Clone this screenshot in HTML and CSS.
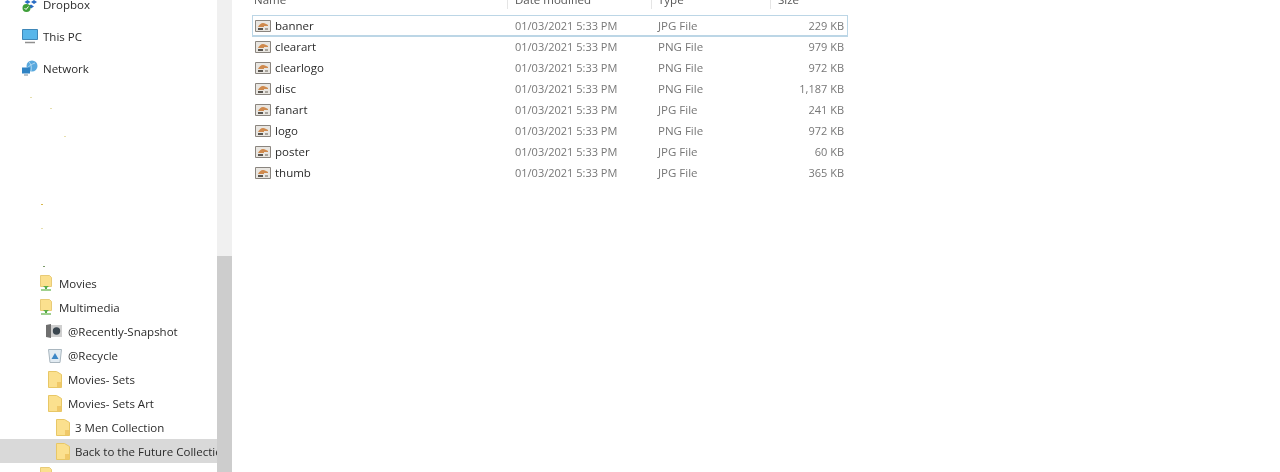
FILE: index.html
```html
<!DOCTYPE html>
<html lang="en">
<head>
    <meta charset="UTF-8">
    <title>Back to the Future Collection</title>
    <link rel="stylesheet" href="styles.css">
</head>
<body>
    <svg class="defs" width="0" height="0">
        <symbol id="folder" viewBox="0 0 14 17">
            <path d="M.5.5h8l5 3v13H.5z" fill="#fbe08e" stroke="#e8c766"/>
            <path d="M9 11h4v5H9z" fill="#f0c868"/>
        </symbol>
        <symbol id="share" viewBox="0 0 12 16">
            <path d="M.5.5h9l2 2v9H.5z" fill="#fbe08e" stroke="#e8cb78"/>
            <path d="M6 11v3" stroke="#5cad48" stroke-width="2"/>
            <path d="M3 11h6l-3 2.500z" fill="#5cad48"/>
            <path d="M1 15h10" stroke="#7fc06a" stroke-width="1.500"/>
        </symbol>
        <symbol id="image" viewBox="0 0 16 14">
            <path d="M.5 1.500h15v11H.5z" fill="#e9e6e1" stroke="#8a857f"/>
            <path d="M3 8c1-2 3-4 5-4s3 1 5 2v1H9v1H3z" fill="#cf8a4e"/>
            <path d="M3 9h5v2H3z" fill="#5a5650"/>
            <path d="M10 9h3v2h-3z" fill="#a9a49c"/>
        </symbol>
    </svg>

    <div class="window">
        <nav class="sidebar">
            <div class="tree">
                <div class="top-item">
                    <svg class="top-icon" viewBox="0 0 16 16">
                        <path d="M5.500 0l3 2-3 2-3-2zM12 0l3 2-3 2-3-2zM5.500 4l3 2-3 2-3-2zM12 4l3 2-3 2-3-2zM9 8.500l3 2-3 2-3-2z" fill="#2a6cc4"/>
                        <circle cx="4.500" cy="12" r="4" fill="#3f9f3a"/>
                        <path d="M2.500 12l1.500 1.500 2.500-3" fill="none" stroke="#fff"/>
                    </svg>
                    Dropbox
                </div>
                <div class="top-item">
                    <svg class="top-icon" viewBox="0 0 16 16">
                        <path d="M.5 1.500h15v10H.5z" fill="#58b6ea" stroke="#3f87b8"/>
                        <path d="M3 14.500h10" stroke="#8f8f8f" stroke-width="1.500"/>
                    </svg>
                    This PC
                </div>
                <div class="top-item">
                    <svg class="top-icon" viewBox="0 0 16 16">
                        <circle cx="10" cy="6" r="5.500" fill="#5aa9de"/>
                        <path d="M7 2c2 2 3 5 2 9M13 3c-3 1-6 3-8 5" fill="none" stroke="#bfe0f4" stroke-width=".8"/>
                        <path d="M0 7.500h8v6H0z" fill="#2f83c4"/>
                        <path d="M2 15h4" stroke="#a5b2bb" stroke-width="1.500"/>
                    </svg>
                    Network
                </div>
                <div class="specks">
                    <i class="speck speck-a"></i>
                    <i class="speck speck-b"></i>
                    <i class="speck speck-c"></i>
                    <i class="speck speck-d"></i>
                    <i class="speck speck-e"></i>
                    <i class="speck speck-f"></i>
                </div>
                <div class="item level-1"><svg class="share-icon"><use href="#share"/></svg>Movies</div>
                <div class="item level-1"><svg class="share-icon"><use href="#share"/></svg>Multimedia</div>
                <div class="item level-2">
                    <svg class="drive-icon" viewBox="0 0 16 14">
                        <path d="M0 1l5-1v14l-5-1z" fill="#6f6f6f"/>
                        <path d="M5 1h11v12H5z" fill="#cfcfcf"/>
                        <circle cx="10.500" cy="7" r="3.700" fill="#3a464f"/>
                    </svg>
                    @Recently-Snapshot
                </div>
                <div class="item level-2">
                    <svg class="bin-icon" viewBox="0 0 14 15">
                        <path d="M.5 1.500h13l-1.500 13H2z" fill="#e2ebf2" stroke="#a9b6bf"/>
                        <path d="M7 5l3.500 6h-7z" fill="#3b86c6"/>
                    </svg>
                    @Recycle
                </div>
                <div class="item level-2"><svg class="folder-icon"><use href="#folder"/></svg>Movies- Sets</div>
                <div class="item level-2"><svg class="folder-icon"><use href="#folder"/></svg>Movies- Sets Art</div>
                <div class="item level-3"><svg class="folder-icon"><use href="#folder"/></svg>3 Men Collection</div>
                <div class="item level-3 selected"><svg class="folder-icon"><use href="#folder"/></svg>Back to the Future Collection</div>
                <div class="item level-1"><svg class="share-icon"><use href="#share"/></svg>Music</div>
            </div>
            <div class="scrollbar"><div class="thumb"></div></div>
        </nav>

        <main class="files">
            <div class="file-header">
                <span class="col-name">Name</span>
                <span class="col-date">Date modified</span>
                <span class="col-type">Type</span>
                <span class="col-size">Size</span>
            </div>
            <div class="file-row focused">
                <span class="col-name"><svg class="file-icon"><use href="#image"/></svg>banner</span>
                <span class="col-date">01/03/2021 5:33 PM</span>
                <span class="col-type">JPG File</span>
                <span class="col-size">229 KB</span>
            </div>
            <div class="file-row">
                <span class="col-name"><svg class="file-icon"><use href="#image"/></svg>clearart</span>
                <span class="col-date">01/03/2021 5:33 PM</span>
                <span class="col-type">PNG File</span>
                <span class="col-size">979 KB</span>
            </div>
            <div class="file-row">
                <span class="col-name"><svg class="file-icon"><use href="#image"/></svg>clearlogo</span>
                <span class="col-date">01/03/2021 5:33 PM</span>
                <span class="col-type">PNG File</span>
                <span class="col-size">972 KB</span>
            </div>
            <div class="file-row">
                <span class="col-name"><svg class="file-icon"><use href="#image"/></svg>disc</span>
                <span class="col-date">01/03/2021 5:33 PM</span>
                <span class="col-type">PNG File</span>
                <span class="col-size">1,187 KB</span>
            </div>
            <div class="file-row">
                <span class="col-name"><svg class="file-icon"><use href="#image"/></svg>fanart</span>
                <span class="col-date">01/03/2021 5:33 PM</span>
                <span class="col-type">JPG File</span>
                <span class="col-size">241 KB</span>
            </div>
            <div class="file-row">
                <span class="col-name"><svg class="file-icon"><use href="#image"/></svg>logo</span>
                <span class="col-date">01/03/2021 5:33 PM</span>
                <span class="col-type">PNG File</span>
                <span class="col-size">972 KB</span>
            </div>
            <div class="file-row">
                <span class="col-name"><svg class="file-icon"><use href="#image"/></svg>poster</span>
                <span class="col-date">01/03/2021 5:33 PM</span>
                <span class="col-type">JPG File</span>
                <span class="col-size">60 KB</span>
            </div>
            <div class="file-row">
                <span class="col-name"><svg class="file-icon"><use href="#image"/></svg>thumb</span>
                <span class="col-date">01/03/2021 5:33 PM</span>
                <span class="col-type">JPG File</span>
                <span class="col-size">365 KB</span>
            </div>
        </main>
    </div>
</body>
</html>
```

FILE: styles.css
```css
html, body {
    margin: 0;
    height: 472px;
    overflow: hidden;
    background-color: white;
}
body {
    font-family: "Open Sans", "Liberation Sans", sans-serif;
    font-size: 11.5px;
    color: #2b2b2b;
}
.defs {
    display: block;
}
.window {
    display: flex;
    height: 472px;
    filter: blur(0.3px);
}

/* left tree */
.sidebar {
    display: flex;
    flex: none;
    width: 232px;
    height: 472px;
    overflow: hidden;
}
.tree {
    width: 217px;
    margin-top: -12px;
    overflow: hidden;
}
.top-item {
    display: flex;
    align-items: center;
    gap: 5px;
    height: 32px;
    padding-left: 22px;
}
.top-icon {
    width: 16px;
    height: 16px;
    flex: none;
}
.specks {
    position: relative;
    height: 187px;
}
.speck {
    position: absolute;
    width: 2px;
    height: 1px;
    background-color: #e6dfae;
}
.speck-a { left: 30px; top: 13px; }
.speck-b { left: 50px; top: 24px; }
.speck-c { left: 64px; top: 52px; }
.speck-d { left: 41px; top: 120px; background-color: #d9b84c; }
.speck-e { left: 41px; top: 144px; }
.speck-f { left: 43px; top: 182px; background-color: #7a9a6a; }
.item {
    display: flex;
    align-items: center;
    height: 24px;
    white-space: nowrap;
}
.level-1 { padding-left: 40px; gap: 7px; }
.level-2 { padding-left: 48px; gap: 6px; }
.level-3 { padding-left: 56px; gap: 5px; }
.selected {
    background-color: #d9d9d9;
}
.share-icon {
    width: 12px;
    height: 16px;
    flex: none;
}
.folder-icon {
    width: 14px;
    height: 17px;
    flex: none;
}
.drive-icon {
    width: 16px;
    height: 14px;
    margin-left: -2px;
    flex: none;
}
.bin-icon {
    width: 14px;
    height: 15px;
    flex: none;
}
.scrollbar {
    flex: none;
    width: 15px;
    background-color: #f0f0f0;
    padding-top: 256px;
}
.thumb {
    height: 216px;
    background-color: #cdcdcd;
}

/* file list */
.files {
    width: 596px;
    margin-left: 20px;
}
.file-header, .file-row {
    display: grid;
    grid-template-columns: 256px 144px 119px 1fr;
    align-items: center;
    box-sizing: border-box;
    width: 596px;
}
.file-header {
    height: 16px;
    margin-top: -7px;
    margin-bottom: 6px;
    color: #555;
}
.file-header span {
    height: 16px;
    line-height: 14px;
    padding-left: 7px;
    border-right: 1px solid #e5e5e5;
}
.file-header .col-name {
    padding-left: 2px;
}
.file-header .col-type {
    padding-left: 6px;
}
.file-header .col-size {
    border-right: none;
}
.file-row {
    height: 21px;
    color: #777;
}
.file-row.focused {
    border: 1px solid #bcd6e6;
    box-shadow: 0 1px 0 #bcd6e6;
}
.file-row:not(.focused) {
    padding: 0 1px;
}
.file-row span {
    padding-left: 6px;
}
.file-row .col-name {
    display: flex;
    align-items: center;
    gap: 4px;
    padding-left: 2px;
    color: #2b2b2b;
}
.file-row .col-date {
    font-size: 11px;
}
.file-row .col-type {
    padding-left: 5px;
}
.file-row .col-size {
    padding-left: 0;
    padding-right: 3px;
    text-align: right;
    font-size: 11px;
}
.file-icon {
    width: 16px;
    height: 14px;
    flex: none;
}
```
